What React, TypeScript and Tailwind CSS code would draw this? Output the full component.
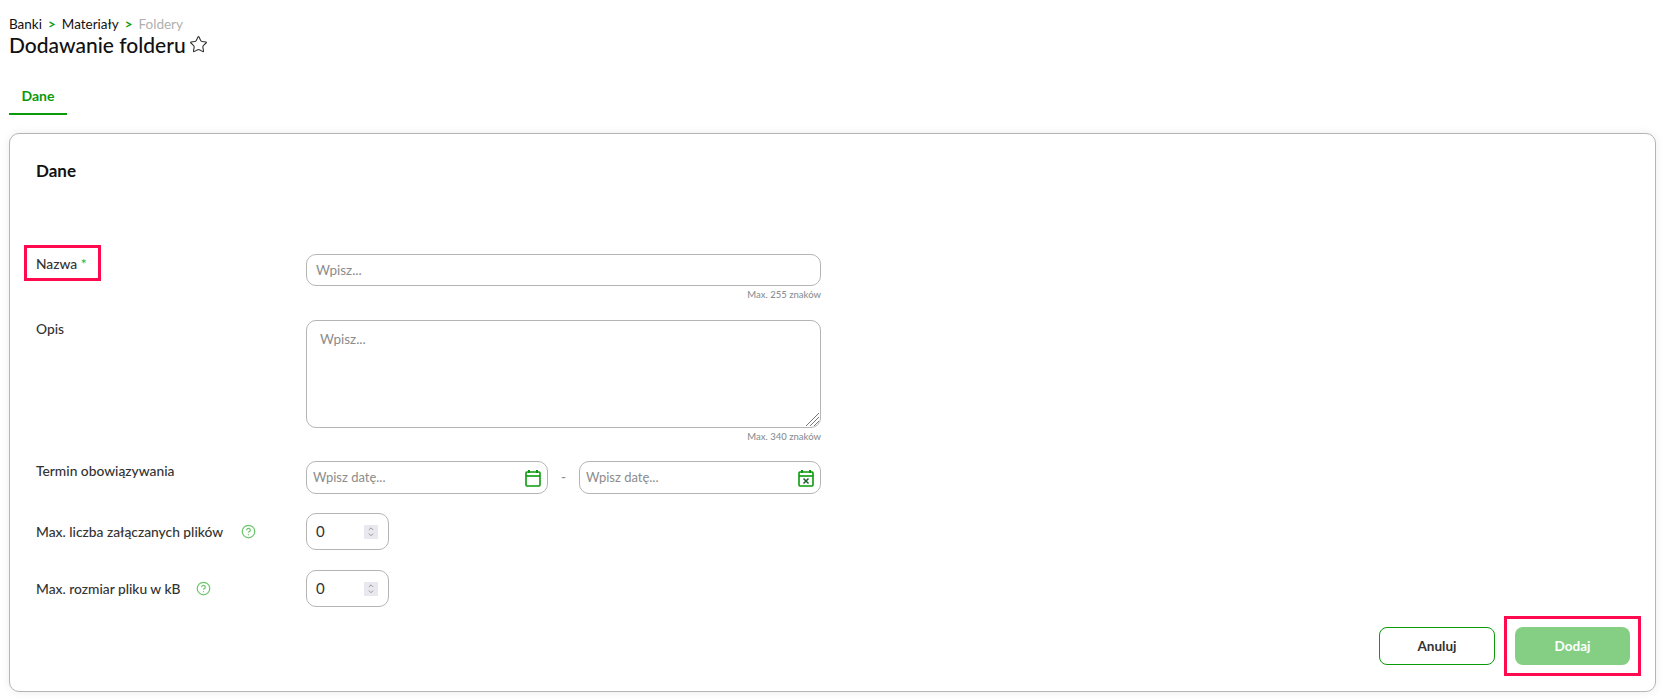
import { CircleHelp, ChevronUp, ChevronDown, Star } from 'lucide-react';

const font = { fontFamily: '"Lato", "Noto Sans", sans-serif' };

const Hint = ({ text }: { text: string }) => (
  <div className="mt-[3px] text-right text-[9.5px] leading-[12px] text-[#8a8f94]">{text}</div>
);

const HelpIcon = ({ gap }: { gap: string }) => (
  <CircleHelp className={`${gap} h-[15px] w-[15px] text-[#6cc76c]`} strokeWidth={2} />
);

const CalendarIcon = ({ cross }: { cross?: boolean }) => (
  <svg width="16" height="18" viewBox="0 0 16 18" fill="none" className="shrink-0">
    <path d="M4 1v3M12 1v3" stroke="#0a9a0a" strokeWidth="2" />
    <rect x="1" y="3" width="14" height="14" rx="1" stroke="#0a9a0a" strokeWidth="1.6" />
    <path d="M1 7h14" stroke="#0a9a0a" strokeWidth="1.6" />
    {cross && <path d="M5.5 9.5l5 5M10.5 9.5l-5 5" stroke="#15602a" strokeWidth="1.5" />}
  </svg>
);

const DateInput = ({ cross }: { cross?: boolean }) => (
  <div className="flex h-[33px] flex-1 items-center justify-between rounded-[10px] border border-[#b5b5b5] pl-[6px] pr-[6px]">
    <span className="text-[13px] font-normal text-[#8c8c8c]">Wpisz datę...</span>
    <CalendarIcon cross={cross} />
  </div>
);

const NumberInput = () => (
  <div className="flex h-[37px] w-[83px] items-center justify-between rounded-[10px] border border-[#b5b5b5] pl-[9px] pr-[10px]">
    <span className="text-[15px] font-normal text-[#333]">0</span>
    <div className="flex h-[14px] w-[14px] flex-col items-center justify-center bg-[#e8e8ee] text-[#666]">
      <ChevronUp className="-mb-[1px] h-[8px] w-[12px]" strokeWidth={2} />
      <ChevronDown className="h-[8px] w-[12px]" strokeWidth={2} />
    </div>
  </div>
);

export default function App() {
  return (
    <div className="relative h-[700px] overflow-hidden bg-white text-[#111]" style={font}>
      <div className="px-[9px] pt-[16px]">
        <div className="flex items-center text-[13.5px] leading-[17px]">
          <span>Banki</span>
          <span className="mx-[6px] font-bold text-[#0a9a0a]">&gt;</span>
          <span>Materiały</span>
          <span className="mx-[6px] font-bold text-[#0a9a0a]">&gt;</span>
          <span className="text-[#b0b0b0]">Foldery</span>
        </div>
        <div className="-mt-[2px] flex items-center text-[21px] font-medium leading-[27px]">
          <span>Dodawanie folderu</span>
          <Star className="ml-[3px] h-[19px] w-[19px] text-[#333]" strokeWidth={1.4} />
        </div>
        <div className="mt-[29px] w-[58px] border-b-2 border-[#0a9a0a] pb-[8px] text-center text-[14px] font-bold leading-[18px] text-[#0a9a0a]">
          Dane
        </div>
      </div>

      <div className="ml-[9px] mt-[18px] h-[559px] w-[1647px] rounded-[10px] border border-[#b5b5b5] bg-white pl-[26px] pr-[25px] pt-[26px] shadow-[0_0_8px_rgba(0,0,0,0.08)]">
        <h2 className="text-[17px] font-bold leading-[22px] text-[#111]">Dane</h2>

        <div className="mt-[72px] w-[785px] text-[13.8px] font-medium text-[#333]">
          <div className="flex">
            <div className="w-[270px] pt-[1px] leading-[18px]">
              Nazwa <span className="text-[#2bb52b]">*</span>
            </div>
            <div className="flex-1">
              <div className="flex h-[32px] items-center rounded-[10px] border border-[#b5b5b5] pl-[9px] text-[13.5px] font-normal text-[#8c8c8c]">
                Wpisz...
              </div>
              <Hint text="Max. 255 znaków" />
            </div>
          </div>

          <div className="mt-[19px] flex">
            <div className="w-[270px] leading-[18px]">Opis</div>
            <div className="flex-1">
              <div className="relative h-[108px] rounded-[10px] border border-[#b5b5b5] pl-[13px] pt-[8px] text-[13.5px] font-normal text-[#8c8c8c]">
                Wpisz...
                <svg width="15" height="15" viewBox="0 0 15 15" className="absolute bottom-0 right-0">
                  <path d="M14 1L1 14M14 5L5 14M14 9L9 14" stroke="#777" strokeWidth="1" />
                </svg>
              </div>
              <Hint text="Max. 340 znaków" />
            </div>
          </div>

          <div className="mt-[18px] flex">
            <div className="w-[270px] pt-[1px] leading-[18px]">Termin obowiązywania</div>
            <div className="flex flex-1 items-center">
              <DateInput />
              <span className="w-[31px] text-center text-[#8c8c8c]">-</span>
              <DateInput cross />
            </div>
          </div>

          <div className="mt-[19px] flex items-center">
            <div className="flex w-[270px] items-center leading-[18px]">
              Max. liczba załączanych plików
              <HelpIcon gap="ml-[18px]" />
            </div>
            <NumberInput />
          </div>

          <div className="mt-[20px] flex items-center">
            <div className="flex w-[270px] items-center leading-[18px]">
              Max. rozmiar pliku w kB
              <HelpIcon gap="ml-[15px]" />
            </div>
            <NumberInput />
          </div>
        </div>

        <div className="mt-[20px] flex justify-end gap-[20px] text-[13.5px] font-bold">
          <button className="h-[38px] w-[116px] rounded-[8px] border border-[#0a9a0a] bg-white text-[#333]">Anuluj</button>
          <button className="h-[38px] w-[115px] rounded-[8px] bg-[#84cf84] text-white">Dodaj</button>
        </div>
      </div>

      {/* red highlight frames */}
      <div className="absolute left-[24px] top-[245px] h-[36px] w-[77px] border-[3px] border-[#ff0a4e]" />
      <div className="absolute left-[1504px] top-[616px] h-[60px] w-[137px] border-[3px] border-[#ff0a4e]" />
    </div>
  );
}
